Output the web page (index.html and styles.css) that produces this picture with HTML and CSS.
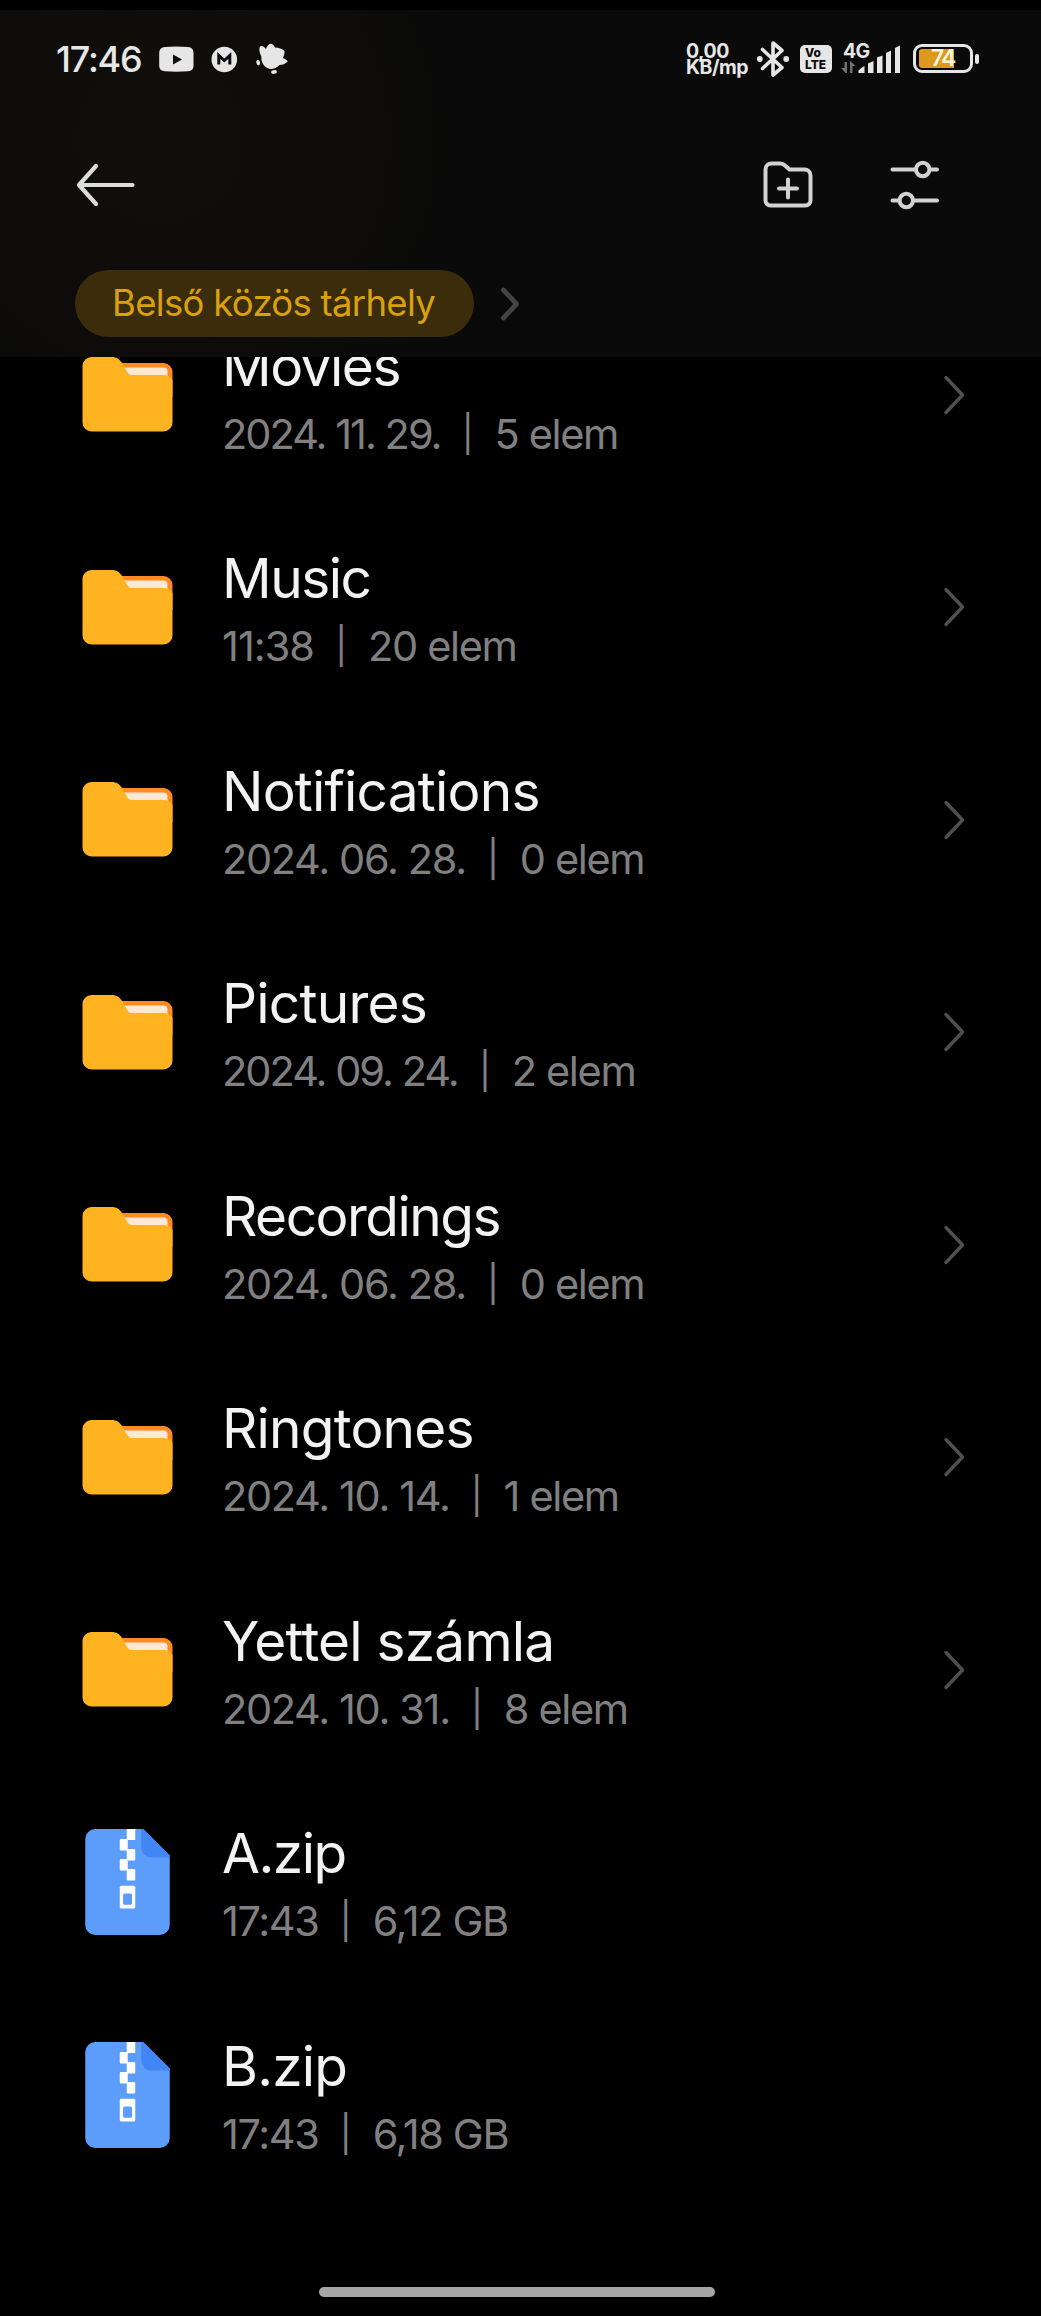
FILE: index.html
```
<!DOCTYPE html>
<html lang="hu">
<head>
<meta charset="utf-8">
<title>Belső közös tárhely</title>
<link rel="stylesheet" href="styles.css">
</head>
<body>
<svg width="0" height="0" class="defs">
  <symbol id="folder" viewBox="0 0 90 75">
    <path fill="#ff8a22" d="M30 6H81a9 9 0 0 1 9 9V40H30Z"/>
    <path fill="#ffe8d4" d="M36 10.5H81a4 4 0 0 1 4 4V30H36Z"/>
    <path fill="#ffb320" d="M9 0H29C34 0 37 2 39.500 6L45 15.500Q46.500 18 50 18H82Q88 18.500 90 23V65.500a9 9 0 0 1-9 9H9a9 9 0 0 1-9-9V9A9 9 0 0 1 9 0Z"/>
  </symbol>
  <symbol id="zip" viewBox="0 0 84.500 106">
    <path fill="#5c9dfc" d="M10 0H58L84.500 26.500V96a10 10 0 0 1-10 10H10A10 10 0 0 1 0 96V10A10 10 0 0 1 10 0Z"/>
    <path fill="#4285f4" d="M56 0H58L84.500 26.500V28.500H66A10 10 0 0 1 56 18.500Z"/>
    <g fill="#fff">
      <path d="M41.500 0H50V11H41.500Z"/>
      <rect x="34.500" y="10" width="8" height="11.500" rx="1"/><rect x="41.500" y="20" width="8.500" height="11.500" rx="1"/>
      <rect x="34.500" y="30" width="8" height="11.500" rx="1"/><rect x="41.500" y="40" width="8.500" height="11.500" rx="1"/>
      <rect x="34.500" y="56.700" width="15.500" height="22.800" rx="1.500"/>
    </g>
    <rect x="37.800" y="64.600" width="9" height="11.200" rx="1.500" fill="#5c9dfc"/>
  </symbol>
  <symbol id="chev" viewBox="0 0 22 40"><path d="M3 2.500L19.500 20L3 37.500" fill="none" stroke="#505050" stroke-width="3.400" stroke-linecap="round" stroke-linejoin="round"/></symbol>
</svg>

<header class="header">
  <div class="status">
    <span class="clock">17:46</span>
    <svg class="notif" width="131" height="34" viewBox="158 43 131 34" fill="#e6e6e6">
      <path fill-rule="evenodd" d="M165 47Q176 46 188 47Q193.500 47.500 193.500 53V66Q193.500 71 188 71.300Q176 72 165 71.300Q159.200 71 159.200 66V53Q159.200 47.500 165 47ZM173 54.500V64.500L182 59.500Z"/>
      <circle cx="224.300" cy="59.500" r="12.800"/>
      <path d="M218.800 64.500V55.500L224.300 60.500L229.800 55.500V64.500" fill="none" stroke="#0b0b0b" stroke-width="3"/>
      <path d="M260 46.500Q263 45 266 49Q267.500 44.500 270.500 43.800Q273.500 44 275 47.500Q281 47.500 284.500 51Q285 54 283 58Q286.500 59 287.800 61.500Q284 65 279.500 65Q276 69 270 69Q263 67 261.500 60.500Q262 57 260.500 54.500Q258.500 50 260 46.500Z"/>
      <ellipse cx="258.300" cy="62.700" rx="1.900" ry="2.700" transform="rotate(-15 258 63)"/>
      <ellipse cx="274" cy="72" rx="2.900" ry="1.900" transform="rotate(-10 274 72)"/>
    </svg>
    <div class="speed"><span>0,00</span><span>KB/mp</span></div>
    <svg width="34" height="38" viewBox="0 0 34 38">
      <path d="M6.500 9.500L26 27.500L17 35V3L26 10.500L6.500 28.500" fill="none" stroke="#e6e6e6" stroke-width="3.600" stroke-linejoin="round" stroke-linecap="round"/>
      <circle cx="3.800" cy="19" r="2.900" fill="#e6e6e6"/><circle cx="30.200" cy="19" r="2.900" fill="#e6e6e6"/>
    </svg>
    <div class="volte"><span>Vo</span><span>LTE</span></div>
    <div class="cell">
      <span class="gen">4G</span>
      <svg width="60" height="30" viewBox="841 44 60 30">
        <path fill="#707070" d="M844.500 62h2.500v11h-1.500l-4.500-5h3.500zM850 73h2.500V66h3l-4.500-4.500h-1z"/>
        <g fill="#e6e6e6"><path d="M858.500 73V70.500Q861 67.500 864.500 66V73Z"/><path d="M868 73V63.500L873.500 61V73Z"/><path d="M877 73V57.500L882.500 55.500V73Z"/><path d="M886 73V53L891 50.500V73Z"/><path d="M895 73V48L900 45.500V73Z"/></g>
      </svg>
    </div>
    <div class="battery"><div class="shell"><i class="level"></i><span>74</span></div><i class="nub"></i></div>
  </div>

  <div class="toolbar">
    <svg width="60" height="46" viewBox="0 0 60 46"><path d="M21 4L4 23L21 42M5 23H57.500" fill="none" stroke="#dcdcda" stroke-width="4.200" stroke-linecap="round" stroke-linejoin="round"/></svg>
    <svg class="newdir" width="50" height="48" viewBox="0 0 50 48"><path d="M2.500 8.500a6 6 0 0 1 6-6H17Q20 2.500 22 4.500L26.500 8.500H41.500a6 6 0 0 1 6 6V39.500a5 5 0 0 1-5 5H7.500a5 5 0 0 1-5-5ZM25 18.500V36.500M16 27.500H34" fill="none" stroke="#d2d2d2" stroke-width="4" stroke-linecap="round" stroke-linejoin="round"/></svg>
    <svg width="50" height="50" viewBox="0 0 50 50" fill="none" stroke="#d2d2d2" stroke-width="4"><path stroke-linecap="round" d="M2.500 9.500H25.500M40 9.500H47M2.500 40.500H9.500M24 40.500H47"/><circle cx="32.700" cy="9.500" r="6.700"/><circle cx="16.300" cy="40.500" r="6.700"/></svg>
  </div>

  <nav class="crumbs">
    <span class="pill">Belső közös tárhely</span>
    <svg width="22" height="36" viewBox="0 0 22 36"><path d="M3.500 4L16.500 18L3.500 32" fill="none" stroke="#444" stroke-width="4.800" stroke-linecap="round" stroke-linejoin="round"/></svg>
  </nav>
</header>

<main class="files">
  <ul>
    <li class="row"><svg class="icon"><use href="#folder"/></svg><div class="text"><h2 class="tight">Movies</h2><p><span class="tight">2024. 11. 29.</span><b>|</b><span>5 elem</span></p></div><svg class="chev"><use href="#chev"/></svg></li>
    <li class="row"><svg class="icon"><use href="#folder"/></svg><div class="text"><h2 class="tight">Music</h2><p><span class="loose">11:38</span><b>|</b><span>20 elem</span></p></div><svg class="chev"><use href="#chev"/></svg></li>
    <li class="row"><svg class="icon"><use href="#folder"/></svg><div class="text"><h2>Notifications</h2><p><span>2024. 06. 28.</span><b>|</b><span>0 elem</span></p></div><svg class="chev"><use href="#chev"/></svg></li>
    <li class="row"><svg class="icon"><use href="#folder"/></svg><div class="text"><h2>Pictures</h2><p><span class="tight">2024. 09. 24.</span><b>|</b><span>2 elem</span></p></div><svg class="chev"><use href="#chev"/></svg></li>
    <li class="row"><svg class="icon"><use href="#folder"/></svg><div class="text"><h2 class="tight">Recordings</h2><p><span>2024. 06. 28.</span><b>|</b><span>0 elem</span></p></div><svg class="chev"><use href="#chev"/></svg></li>
    <li class="row"><svg class="icon"><use href="#folder"/></svg><div class="text"><h2>Ringtones</h2><p><span>2024. 10. 14.</span><b>|</b><span>1 elem</span></p></div><svg class="chev"><use href="#chev"/></svg></li>
    <li class="row"><svg class="icon"><use href="#folder"/></svg><div class="text"><h2>Yettel számla</h2><p><span>2024. 10. 31.</span><b>|</b><span>8 elem</span></p></div><svg class="chev"><use href="#chev"/></svg></li>
    <li class="row"><svg class="icon file"><use href="#zip"/></svg><div class="text"><h2 class="tight">A.zip</h2><p><span>17:43</span><b>|</b><span>6,12 GB</span></p></div></li>
    <li class="row"><svg class="icon file"><use href="#zip"/></svg><div class="text"><h2>B.zip</h2><p><span>17:43</span><b>|</b><span>6,18 GB</span></p></div></li>
  </ul>
</main>
<footer class="home"><i></i></footer>
</body>
</html>
```
FILE: styles.css
```
* { box-sizing: border-box; }
body {
  margin: 0;
  width: 1041px;
  height: 2316px;
  background: #000;
  color: #f3f3f3;
  font-family: Inter, "Noto Sans", sans-serif;
  display: flex;
  flex-direction: column;
  overflow: hidden;
}
svg { display: block; flex: none; }
.defs { position: absolute; }

.header {
  flex: none;
  height: 347px;
  margin-top: 10px;
  background: radial-gradient(circle 320px at 160px 130px, #110f0b, #0a0a0a);
}

/* status bar */
.status {
  height: 98px;
  padding: 30px 61px 0 56px;
  display: flex;
  align-items: flex-start;
  color: #e6e6e6;
}
.clock {
  width: 102px;
  font-size: 36px;
  line-height: 38px;
  font-weight: 500;
  letter-spacing: -1.2px;
}
.notif { margin-top: 3px; }
.speed {
  display: flex;
  flex-direction: column;
  width: 70px;
  margin-left: 397px;
  font-size: 19.5px;
  line-height: 16px;
  font-weight: 650;
  letter-spacing: -.5px;
  padding-top: 3px;
}
.volte {
  width: 32px;
  height: 28px;
  margin: 5px 0 0 10px;
  padding: 2px 0 0 5px;
  border-radius: 5px;
  background: #e6e6e6;
  color: #0b0b0b;
  display: flex;
  flex-direction: column;
  font-size: 12px;
  line-height: 12px;
  font-weight: 800;
}
.cell { width: 60px; margin: 4px 0 0 9px; display: grid; }
.cell > * { grid-area: 1 / 1; }
.gen {
  padding-left: 2px;
  font-size: 19.5px;
  line-height: 14px;
  font-weight: 700;
  letter-spacing: -.8px;
}
.battery { display: flex; align-items: center; gap: 2px; margin: 4px 0 0 12px; }
.shell {
  width: 60px;
  height: 29px;
  border: 3px solid #e6e6e6;
  border-radius: 9px;
  padding: 2px 3px;
  display: grid;
  align-items: center;
}
.shell > * { grid-area: 1 / 1; }
.level { width: 35px; height: 19px; border-radius: 3px 0 0 3px; background: #dd981e; }
.shell span { padding-left: 12px; font-size: 23px; line-height: 19px; font-weight: 600; letter-spacing: -2px; color: #fff3d8; }
.nub { width: 4px; height: 10px; border-radius: 2px; background: #e6e6e6; }

/* toolbar */
.toolbar {
  height: 154px;
  padding: 0 101px 0 75px;
  display: flex;
  align-items: center;
}
.newdir { margin: 0 77px 0 auto; }

/* breadcrumb */
.crumbs { display: flex; align-items: center; gap: 26px; padding: 8px 0 0 75px; }
.pill {
  width: 399px;
  height: 67px;
  padding-left: 37px;
  border-radius: 34px;
  background: #3b2c0b;
  color: #d9a110;
  font-size: 36.5px;
  line-height: 67px;
  letter-spacing: -.7px;
}

/* file list */
.files { flex: none; height: 1923px; overflow: hidden; display: flex; flex-direction: column; }
.files ul { list-style: none; margin: -68.5px 0 0; padding: 0 76px 0 82px; flex: none; }
.row { height: 212.5px; display: flex; align-items: center; }
.icon { width: 91px; height: 75px; }
.icon.file { height: 106px; }
.text { flex: 1; padding: 10px 0 0 49px; }
.text h2 {
  margin: 0;
  font-size: 55px;
  line-height: 66px;
  font-weight: 400;
  letter-spacing: -.8px;
  white-space: nowrap;
}
.text h2.tight { letter-spacing: -1.5px; }
.text p {
  margin: 2px 0 0;
  display: flex;
  font-size: 41.5px;
  line-height: 66px;
  font-weight: 380;
  letter-spacing: -1.35px;
  color: #808080;
  white-space: nowrap;
}
.text p .tight { letter-spacing: -2px; }
.text p .loose { letter-spacing: -1px; }
.text b { width: 55px; margin-left: -1px; text-align: center; font-weight: 400; font-size: 36px; }
.chev { width: 22px; height: 40px; }

.home { height: 36px; padding-top: 7px; }
.home i { display: block; width: 396px; height: 10px; margin-left: 319px; border-radius: 5px; background: #a6a6a6; }
```
